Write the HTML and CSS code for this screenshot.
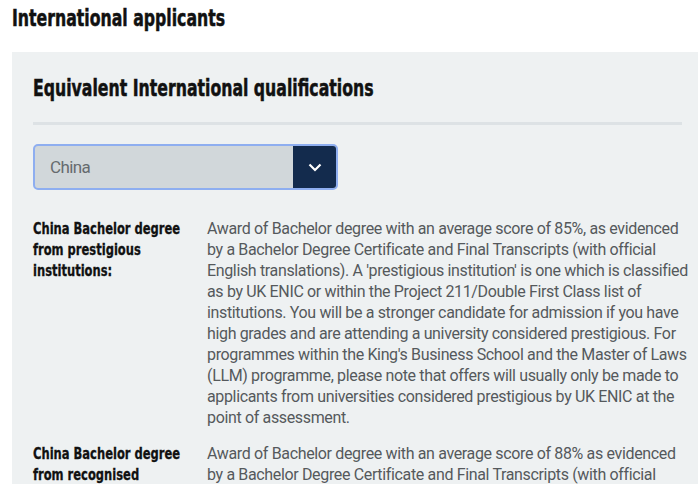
FILE: index.html
```html
<!DOCTYPE html>
<html lang="en">
<head>
    <meta charset="UTF-8">
    <meta name="viewport" content="width=device-width, initial-scale=1.0">
    <title>International applicants</title>
    <link rel="stylesheet" href="styles.css">
</head>
<body>
    <h2 class="page-title"><span class="narrow">International applicants</span></h2>
    <div class="panel">
        <h3 class="panel-title"><span class="narrow">Equivalent International qualifications</span></h3>
        <hr class="divider">
        <div class="select-box">
            <span class="select-value">China</span>
            <span class="select-btn">
                <svg width="14" height="9" viewBox="0 0 14 9"><path d="M1.5 1.5 L7 7 L12.5 1.5" fill="none" stroke="#fff" stroke-width="2.2"/></svg>
            </span>
        </div>
        <div class="quals">
            <div class="qual">
                <div class="qual-name"><span class="narrow">China Bachelor degree from prestigious institutions:</span></div>
                <div class="qual-text">Award of Bachelor degree with an average score of 85%, as evidenced by a Bachelor Degree Certificate and Final Transcripts (with official English translations). A 'prestigious institution' is one which is classified as by UK ENIC or within the Project 211/Double First Class list of institutions. You will be a stronger candidate for admission if you have high grades and are attending a university considered prestigious. For programmes within the King's Business School and the Master of Laws (LLM) programme, please note that offers will usually only be made to applicants from universities considered prestigious by UK ENIC at the point of assessment.</div>
            </div>
            <div class="qual">
                <div class="qual-name"><span class="narrow">China Bachelor degree from recognised institutions:</span></div>
                <div class="qual-text">Award of Bachelor degree with an average score of 88% as evidenced by a Bachelor Degree Certificate and Final Transcripts (with official English translations).</div>
            </div>
        </div>
    </div>
</body>
</html>
```

FILE: styles.css
```css
body {
    margin: 0;
    padding: 0 2px 0 12px;
    background-color: #fff;
    font-family: Roboto, "Liberation Sans", sans-serif;
    overflow: hidden;
}

/* no condensed grotesque installed, so squeeze the condensed DejaVu bold */
.narrow {
    display: inline-block;
    transform: scaleX(0.76);
    transform-origin: left top;
    white-space: nowrap;
    -webkit-text-stroke: 0.5px #111;
}

.page-title {
    margin: 0;
    padding: 5px 0 0;
    height: 47px;
    font-family: "DejaVu Sans Condensed", "DejaVu Sans", sans-serif;
    font-stretch: condensed;
    font-weight: bold;
    font-size: 23px;
    line-height: 27px;
    color: #111;
}

.panel {
    background-color: #eef1f2;
    padding: 23px 5px 0 21px;
    height: 500px;
}

.panel-title {
    margin: 0;
    font-family: "DejaVu Sans Condensed", "DejaVu Sans", sans-serif;
    font-stretch: condensed;
    font-weight: bold;
    font-size: 23px;
    line-height: 27px;
    color: #111;
}

.divider {
    border: none;
    height: 3px;
    background-color: #dde2e5;
    margin: 20px 11px 19px 0;
}

.select-box {
    display: flex;
    width: 301px;
    height: 42px;
    border: 2px solid #8eaef0;
    border-radius: 5px;
    background-color: #d1d7da;
    overflow: hidden;
}

.select-value {
    flex: 1;
    padding-left: 15px;
    line-height: 42px;
    font-size: 17px;
    letter-spacing: -0.6px;
    color: #666b6e;
}

.select-btn {
    width: 43px;
    background-color: #132b4d;
    display: flex;
    align-items: center;
    justify-content: center;
}

.quals {
    padding-top: 28px;
}

.qual {
    display: grid;
    grid-template-columns: 174px 1fr;
    margin-bottom: 15px;
}

.qual-name {
    font-family: "DejaVu Sans Condensed", "DejaVu Sans", sans-serif;
    font-stretch: condensed;
    font-weight: bold;
    font-size: 16px;
    line-height: 21px;
    color: #111;
}

.qual-name .narrow {
    width: 204px;
    white-space: normal;
    transform: scaleX(0.8);
    -webkit-text-stroke: 0.3px #111;
}

.qual-text {
    font-size: 16px;
    line-height: 21px;
    letter-spacing: -0.35px;
    color: #55595c;
}
```
